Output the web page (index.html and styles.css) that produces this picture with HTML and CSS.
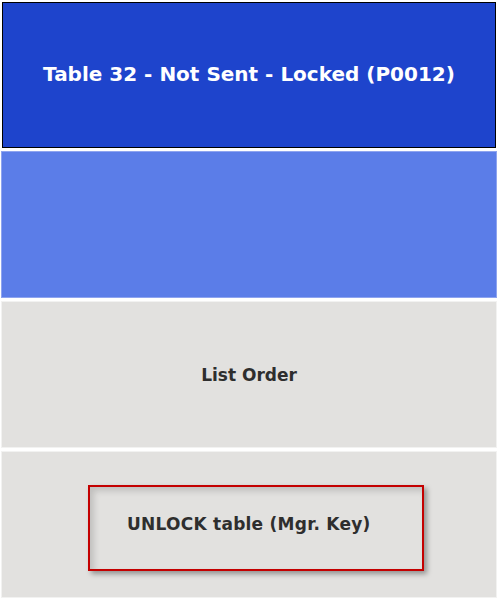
FILE: index.html
```html
<!DOCTYPE html>
<html>
<head>
<meta charset="utf-8">
<link rel="stylesheet" href="styles.css">
</head>
<body>
<div class="screen">
  <div class="header"><span class="title">Table 32 - Not Sent - Locked (P0012)</span></div>
  <div class="panel blue"></div>
  <div class="panel grey"><span class="label">List Order</span></div>
  <div class="panel grey action">
    <div class="unlock"><span class="label unlock-label">UNLOCK table (Mgr. Key)</span></div>
  </div>
</div>
</body>
</html>
```
FILE: styles.css
```css
html, body {
  margin: 0;
  padding: 0;
  background: #ffffff;
  width: 498px;
  height: 598px;
  overflow: hidden;
}
.screen {
  display: flex;
  flex-direction: column;
  padding-top: 2px;
  gap: 3px;
  font-family: "DejaVu Sans", Verdana, sans-serif;
  font-weight: bold;
}
.header {
  margin: 0 2px;
  height: 144px;
  background: #1e44cc;
  border: 1px solid #000;
  display: flex;
  align-items: center;
  justify-content: center;
}
.title {
  color: #fff;
  font-size: 20px;
  padding-bottom: 2px;
}
.panel {
  margin: 0 1px;
  height: 145px;
  border: 1px solid #fafafa;
  display: flex;
  align-items: center;
  justify-content: center;
}
.blue {
  background: #5b7de8;
  border-color: #8ea4ef;
}
.grey {
  background: #e2e1df;
  border-color: #f2f2f1;
}
.label {
  color: #2e2e2e;
  font-size: 17px;
}
.unlock-label {
  letter-spacing: 0.25px;
}
.action {
  justify-content: flex-start;
  align-items: flex-start;
}
.unlock {
  margin: 33px 0 0 86px;
  width: 295px;
  height: 74px;
  padding-left: 37px;
  padding-bottom: 8px;
  border: 2px solid #c40000;
  box-shadow: 3px 3px 5px rgba(0,0,0,0.35), inset 4px 4px 6px rgba(0,0,0,0.15);
  display: flex;
  align-items: center;
}
```
